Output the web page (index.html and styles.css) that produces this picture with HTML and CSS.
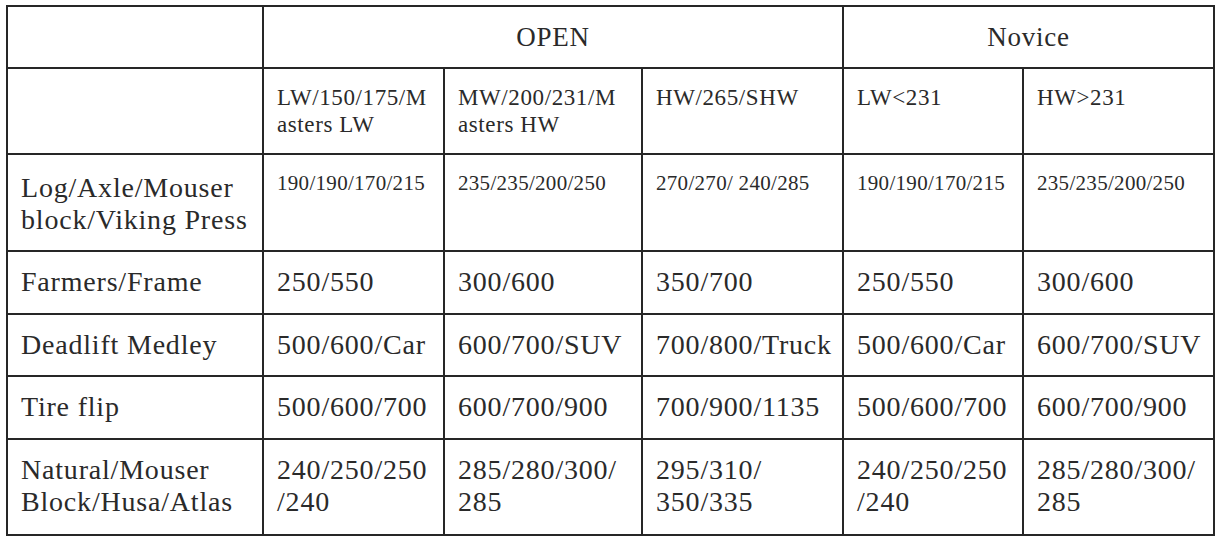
FILE: index.html
```html
<!DOCTYPE html>
<html>
<head>
<meta charset="utf-8">
<link rel="stylesheet" href="styles.css">
</head>
<body>
<div class="wrap">
<table class="grid">
  <colgroup>
    <col class="c1"><col class="c2"><col class="c3"><col class="c4"><col class="c5"><col class="c6">
  </colgroup>
  <tr class="r-head">
    <td></td>
    <td class="group" colspan="3">OPEN</td>
    <td class="group" colspan="2">Novice</td>
  </tr>
  <tr class="r-sub">
    <td></td>
    <td class="sub">LW/150/175/M<br>asters LW</td>
    <td class="sub">MW/200/231/M<br>asters HW</td>
    <td class="sub">HW/265/SHW</td>
    <td class="sub">LW&lt;231</td>
    <td class="sub">HW&gt;231</td>
  </tr>
  <tr class="r-tall r-log">
    <td class="label">Log/Axle/Mouser<br>block/Viking Press</td>
    <td class="small">190/190/170/215</td>
    <td class="small">235/235/200/250</td>
    <td class="small">270/270/ 240/285</td>
    <td class="small">190/190/170/215</td>
    <td class="small">235/235/200/250</td>
  </tr>
  <tr class="r-row">
    <td class="label">Farmers/Frame</td>
    <td>250/550</td>
    <td>300/600</td>
    <td>350/700</td>
    <td>250/550</td>
    <td>300/600</td>
  </tr>
  <tr class="r-row r-62">
    <td class="label">Deadlift Medley</td>
    <td>500/600/Car</td>
    <td>600/700/SUV</td>
    <td>700/800/Truck</td>
    <td>500/600/Car</td>
    <td>600/700/SUV</td>
  </tr>
  <tr class="r-row">
    <td class="label">Tire flip</td>
    <td>500/600/700</td>
    <td>600/700/900</td>
    <td>700/900/1135</td>
    <td>500/600/700</td>
    <td>600/700/900</td>
  </tr>
  <tr class="r-last">
    <td class="label">Natural/Mouser<br>Block/Husa/Atlas</td>
    <td>240/250/250<br>/240</td>
    <td>285/280/300/<br>285</td>
    <td>295/310/<br>350/335</td>
    <td>240/250/250<br>/240</td>
    <td>285/280/300/<br>285</td>
  </tr>
</table>
</div>
</body>
</html>
```
FILE: styles.css
```css
html, body {
  margin: 0;
  padding: 0;
  background: #ffffff;
}

.wrap {
  padding: 5px 0 0 6px;
}

.grid {
  border-collapse: collapse;
  table-layout: fixed;
  width: 1207px;
  font-family: "Liberation Serif", "Times New Roman", serif;
  color: #2a2a2a;
}

.c1 { width: 256px; }
.c2 { width: 181px; }
.c3 { width: 198px; }
.c4 { width: 201px; }
.c5 { width: 180px; }
.c6 { width: 191px; }

.grid td {
  border: 2px solid #262626;
  vertical-align: top;
  padding: 14px 2px 0 13px;
  font-size: 28px;
  line-height: 32px;
  letter-spacing: 0.8px;
  white-space: nowrap;
  overflow: hidden;
}

.r-head { height: 62px; }
.r-sub { height: 86px; }
.r-tall { height: 97px; }
.r-row { height: 63px; }
.r-62 { height: 62px; }
.r-last { height: 96px; }

.grid td.group {
  text-align: center;
  vertical-align: middle;
  padding: 0;
  font-size: 27px;
  letter-spacing: 0.8px;
}

.grid td.sub {
  font-size: 23px;
  line-height: 27px;
  letter-spacing: 0.6px;
  padding-top: 15px;
}

.grid td.small {
  font-size: 21px;
  line-height: 23px;
  letter-spacing: 0.3px;
  padding-top: 17px;
}

.r-log td.label {
  padding-top: 17px;
}
```
